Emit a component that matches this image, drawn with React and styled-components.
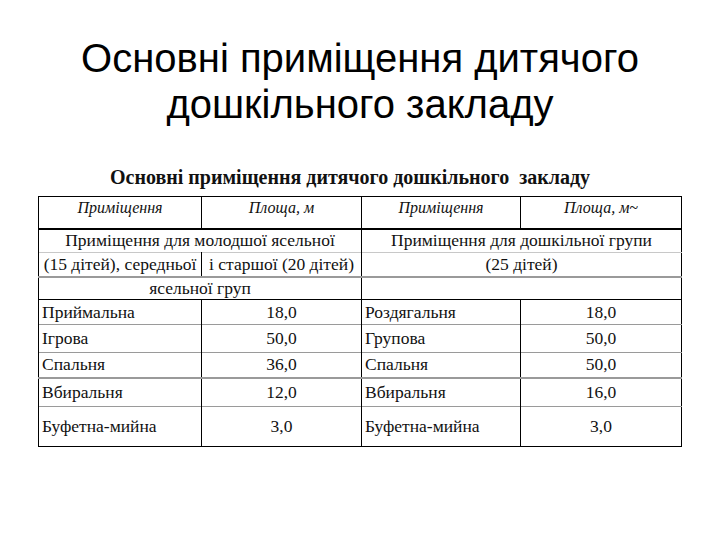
import React from "react";
import styled, { createGlobalStyle } from "styled-components";

const GlobalStyle = createGlobalStyle`
  html, body {
    margin: 0;
    padding: 0;
    background: #ffffff;
  }
`;

const groupRows = [
  {
    h: 24,
    line: "1px solid #c8c8c8",
    left: [{ text: "Приміщення для молодшої ясельної", span: 2 }],
    right: "Приміщення для дошкільної групи",
  },
  {
    h: 24,
    line: "2px solid #9a9a9a",
    left: [
      { text: "(15 дітей), середньої", span: 1 },
      { text: "і старшої (20 дітей)", span: 1 },
    ],
    right: "(25 дітей)",
  },
  {
    h: 23,
    line: "1px solid #000",
    left: [{ text: "ясельної груп", span: 2 }],
    right: "",
  },
];

const rooms = [
  { h: 25, line: "1px solid #9a9a9a", a: "Приймальна", av: "18,0", b: "Роздягальня", bv: "18,0" },
  { h: 28, line: "1px solid #9a9a9a", a: "Ігрова", av: "50,0", b: "Групова", bv: "50,0" },
  { h: 25, line: "2px solid #9a9a9a", a: "Спальня", av: "36,0", b: "Спальня", bv: "50,0" },
  { h: 29, line: "1px solid #9a9a9a", a: "Вбиральня", av: "12,0", b: "Вбиральня", bv: "16,0" },
  { h: 40, line: "1px solid #000", a: "Буфетна-мийна", av: "3,0", b: "Буфетна-мийна", bv: "3,0" },
];

function App() {
  return (
    <>
      <GlobalStyle />
      <Slide>
        <Title>
          Основні приміщення дитячого
          <br />
          дошкільного закладу
        </Title>
        <Caption>Основні приміщення дитячого дошкільного&nbsp; закладу</Caption>
        <Table>
          <colgroup>
            <col style={{ width: 163 }} />
            <col style={{ width: 160 }} />
            <col style={{ width: 159 }} />
            <col style={{ width: 161 }} />
          </colgroup>
          <tbody>
            <Row $h={32} $line="2px solid #000">
              <HeadCell>Приміщення</HeadCell>
              <HeadCell>Площа, м</HeadCell>
              <HeadCell>Приміщення</HeadCell>
              <HeadCell>Площа, м~</HeadCell>
            </Row>
            {groupRows.map((r, i) => (
              <Row key={i} $h={r.h} $line={r.line}>
                {r.left.map((c, j) => (
                  <Cell key={j} colSpan={c.span} $align="center">
                    {c.text}
                  </Cell>
                ))}
                <Cell colSpan={2} $align="center">
                  {r.right}
                </Cell>
              </Row>
            ))}
            {rooms.map((r, i) => (
              <Row key={"r" + i} $h={r.h} $line={r.line}>
                <Cell>{r.a}</Cell>
                <Cell $align="center">{r.av}</Cell>
                <Cell>{r.b}</Cell>
                <Cell $align="center">{r.bv}</Cell>
              </Row>
            ))}
          </tbody>
        </Table>
      </Slide>
    </>
  );
}

export default App;

const Slide = styled.div`
  width: 720px;
  height: 540px;
  display: flex;
  flex-direction: column;
  align-items: center;
  overflow: hidden;
`;

const Title = styled.h1`
  margin: 35px 0 0;
  font-family: "Liberation Sans", Arial, sans-serif;
  font-weight: normal;
  font-size: 40px;
  line-height: 46px;
  color: #000;
  text-align: center;
`;

const Caption = styled.div`
  margin-top: 38px;
  margin-right: 20px;
  font-family: "Liberation Serif", "Times New Roman", serif;
  font-weight: bold;
  font-size: 20px;
  line-height: 24px;
  color: #111;
`;

const Table = styled.table`
  margin-top: 7px;
  width: 643px;
  border-collapse: collapse;
  table-layout: fixed;
  border: 1px solid #000;
  font-family: "Liberation Serif", "Times New Roman", serif;
  color: #111;
`;

const Row = styled.tr`
  height: ${(p) => p.$h}px;
  border-bottom: ${(p) => p.$line};
`;

const Cell = styled.td`
  padding: 0 3px;
  font-size: 17.5px;
  line-height: 19px;
  text-align: ${(p) => p.$align || "left"};
  vertical-align: middle;
  border-left: 1px solid #000;
  white-space: nowrap;
  overflow: hidden;
`;

const HeadCell = styled.td`
  padding: 2px 3px 0;
  font-size: 16px;
  font-style: italic;
  line-height: 18px;
  text-align: center;
  vertical-align: top;
  border-left: 1px solid #000;
  white-space: nowrap;
`;
